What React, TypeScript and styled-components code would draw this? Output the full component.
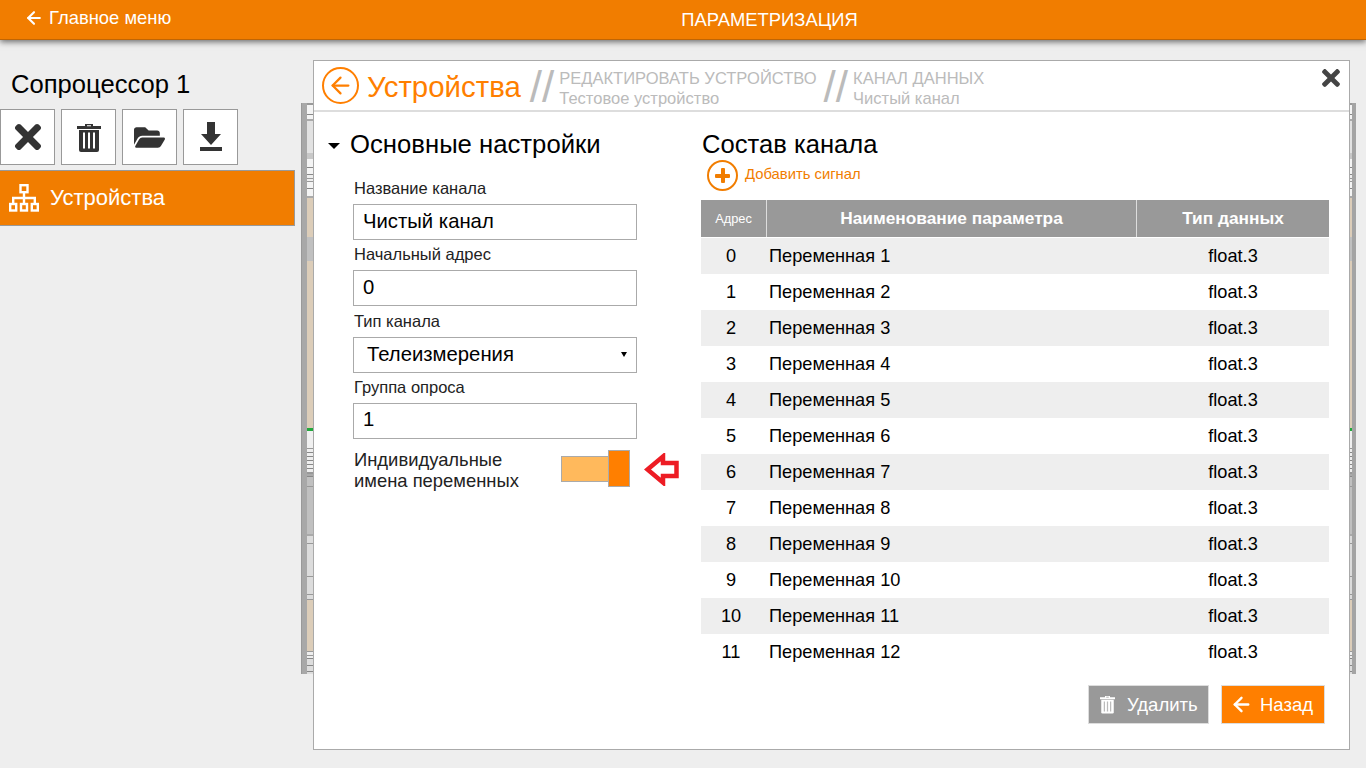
import * as React from "react";
import styled, { createGlobalStyle } from "styled-components";
import { ArrowLeft } from "lucide-react";
import { FaTimes, FaFolderOpen } from "react-icons/fa";

const orange = "#f17d00";
const bright = "#ff7f00";

const GlobalStyle = createGlobalStyle`
  html, body { margin: 0; height: 100%; background: #eeeeee; overflow: hidden; }
  body { font-family: "Liberation Sans", Arial, sans-serif; color: #000; }
`;

const Page = styled.div`
  position: relative;
  width: 1366px;
  height: 768px;
  overflow: hidden;
`;

const TopBar = styled.header`
  height: 40px;
  background: ${orange};
  border-bottom: 1px solid #c06504;
  box-shadow: 0 2px 6px rgba(0, 0, 0, 0.55);
  display: grid;
  grid-template-columns: 1fr auto 1fr;
  align-items: center;
  color: #fff;
  box-sizing: border-box;
  padding-left: 173px;
  position: relative;
`;

const MenuLink = styled.div`
  position: absolute;
  left: 24px;
  top: 7px;
  display: flex;
  align-items: center;
  gap: 5px;
  font-size: 18.4px;
  line-height: 21px;
`;

const BarTitle = styled.div`
  grid-column: 2;
  font-size: 18.4px;
`;

const Body = styled.div`
  display: flex;
  align-items: flex-start;
`;

const Sidebar = styled.aside`
  width: 295px;
  flex: none;
`;

const SideTitle = styled.div`
  font-size: 25.6px;
  line-height: 28px;
  padding: 30px 0 11px 11px;
`;

const ToolRow = styled.div`
  display: flex;
  gap: 6px;
`;

const ToolButton = styled.div`
  width: 55px;
  height: 56px;
  box-sizing: border-box;
  background: #fff;
  border: 1px solid #999;
  display: flex;
  align-items: center;
  justify-content: center;
  color: #333;
`;

const NavItem = styled.div`
  height: 56px;
  margin-top: 5px;
  box-sizing: border-box;
  background: ${orange};
  border: 1px solid #999;
  border-left: none;
  color: #fff;
  display: flex;
  align-items: center;
  gap: 11px;
  padding-left: 9px;
  font-size: 22px;
`;

const Backdrop = styled.div`
  margin: 63px 0 0 6px;
  width: 1055px;
  height: 571px;
  box-sizing: border-box;
  display: flex;
  background: #a8a8a8;
  padding-left: 5px;
  border-left: 1px solid #999;
  border-right: 4px solid #a4a4a4;
`;

const StripeColumn = styled.div`
  flex: 1;
  display: flex;
  flex-direction: column;
  background: #ddd;
  overflow: hidden;
`;

const Stripe = styled.div<{ $h: number; $c: string }>`
  height: ${(p) => p.$h}px;
  background: ${(p) => p.$c};
  flex: none;
`;

const Modal = styled.section`
  position: absolute;
  left: 313px;
  top: 60px;
  width: 1037px;
  height: 690px;
  box-sizing: border-box;
  background: #fff;
  border: 1px solid #aaa;
  display: flex;
  flex-direction: column;
`;

const ModalHead = styled.div`
  height: 51px;
  flex: none;
  box-sizing: border-box;
  border-bottom: 2px solid #ddd;
  display: flex;
  align-items: center;
  padding-left: 8px;
  position: relative;
`;

const BackCircle = styled.div`
  width: 37px;
  height: 37px;
  box-sizing: border-box;
  border: 2px solid ${bright};
  border-radius: 50%;
  display: flex;
  align-items: center;
  justify-content: center;
  color: ${bright};
`;

const CrumbMain = styled.div`
  font-size: 29.4px;
  color: ${bright};
  margin: 3px 0 0 8px;
`;

const Slashes = styled.div<{ $left: number }>`
  font-size: 44px;
  color: #bbb;
  margin: 2px 5px 0 ${(p) => p.$left}px;
  line-height: 40px;
`;

const Crumb = styled.div`
  color: #bbb;
  font-size: 16.55px;
  line-height: 20px;
  margin-top: 7px;
`;

const CloseIcon = styled.div`
  position: absolute;
  right: 5px;
  top: 4px;
  color: #444;
  display: flex;
`;

const ModalBody = styled.div`
  flex: 1;
  display: flex;
`;

const LeftCol = styled.div`
  width: 388px;
  flex: none;
  box-sizing: border-box;
  padding: 17px 0 0 14px;
`;

const SectionTitle = styled.div`
  font-size: 25.7px;
  line-height: 30px;
  display: flex;
  align-items: center;
`;

const Caret = styled.span`
  width: 0;
  height: 0;
  border-left: 6px solid transparent;
  border-right: 6px solid transparent;
  border-top: 6px solid #000;
  margin-right: 10px;
  margin-top: 3px;
`;

const Form = styled.div`
  padding: 20px 0 0 25px;
  width: 284px;
`;

const FieldLabel = styled.div`
  font-size: 16.5px;
  line-height: 18px;
  color: #222;
  padding: 0 0 2px 1px;
`;

const FieldValue = styled.div`
  height: 36px;
  box-sizing: border-box;
  border: 1px solid #aaa;
  margin: 5px 0 5.33px;
  padding: 0 9px 2px;
  display: flex;
  align-items: center;
  justify-content: space-between;
  font-size: 20.3px;
`;

const SelectValue = styled(FieldValue)`
  padding: 0 9px 0 13px;
`;

const SelectCaret = styled.span`
  width: 0;
  height: 0;
  border-left: 3px solid transparent;
  border-right: 3px solid transparent;
  border-top: 5px solid #000;
`;

const ToggleRow = styled.div`
  display: flex;
  align-items: center;
  margin-top: 10px;
  padding-left: 1px;
  width: 360px;
`;

const ToggleLabel = styled.div`
  width: 207px;
  font-size: 18.4px;
  line-height: 21px;
  color: #222;
  white-space: nowrap;
`;

const ToggleTrack = styled.div`
  position: relative;
  width: 69px;
  height: 26px;
  box-sizing: border-box;
  background: #ffb95c;
  border: 1px solid #aaa;
  margin-top: -2px;
`;

const ToggleKnob = styled.div`
  position: absolute;
  right: -1px;
  top: -7px;
  width: 22px;
  height: 37px;
  box-sizing: border-box;
  background: ${bright};
  border: 1px solid #aaa;
`;

const Hint = styled.svg`
  margin: -1px 0 0 14px;
`;

const RightCol = styled.div`
  flex: 1;
  min-width: 0;
  padding: 17px 20px 0 0;
  display: flex;
  flex-direction: column;
`;

const TableTitle = styled.div`
  font-size: 25.6px;
  line-height: 30px;
`;

const AddRow = styled.div`
  display: flex;
  align-items: center;
  gap: 7px;
  color: ${orange};
  font-size: 14.8px;
  padding-left: 5px;
  height: 33px;
  margin: 0 0 8px;
`;

const AddLabel = styled.span`
  margin-top: -4px;
`;

const AddCircle = styled.div`
  width: 31px;
  height: 31px;
  box-sizing: border-box;
  border: 2px solid ${orange};
  border-radius: 50%;
  position: relative;
  flex: none;
  &::before,
  &::after {
    content: "";
    position: absolute;
    background: ${orange};
    border-radius: 1px;
  }
  &::before { left: 6px; right: 6px; top: 11.5px; height: 4px; }
  &::after { top: 6px; bottom: 6px; left: 11.5px; width: 4px; }
`;

const Table = styled.div`
  font-size: 18.2px;
  width: 628px;
  margin-left: -1px;
`;

const HeadRow = styled.div`
  display: grid;
  grid-template-columns: 65px 369px 192px;
  gap: 0 1px;
  height: 37px;
  background: #ddd;
  margin-bottom: 1px;
  color: #fff;
`;

const HeadCell = styled.div<{ $small?: boolean }>`
  display: flex;
  align-items: center;
  justify-content: center;
  background: #999;
  font-size: ${(p) => (p.$small ? "12.8px" : "17.3px")};
  font-weight: ${(p) => (p.$small ? 400 : 700)};
`;

const DataRow = styled.div<{ $alt: boolean }>`
  display: grid;
  grid-template-columns: 68px 368px 192px;
  height: 36px;
  align-items: center;
  background: ${(p) => (p.$alt ? "#eeeeee" : "#fff")};
`;

const AddrCell = styled.div`
  text-align: center;
  padding-right: 8px;
`;

const NameCell = styled.div`
  white-space: nowrap;
`;

const TypeCell = styled.div`
  text-align: center;
`;

const Footer = styled.div`
  display: flex;
  justify-content: flex-end;
  gap: 12px;
  margin-top: 15px;
  padding-right: 4px;
`;

const ActionButton = styled.div<{ $bg: string }>`
  height: 39px;
  box-sizing: border-box;
  border: 1px solid #ddd;
  background: ${(p) => p.$bg};
  color: #fff;
  display: flex;
  align-items: center;
  font-size: 18.5px;
`;

const DeleteButton = styled(ActionButton)`
  width: 121px;
  padding-left: 11px;
  gap: 12px;
`;

const BackButton = styled(ActionButton)`
  width: 104px;
  padding-left: 8px;
  gap: 7px;
`;

const TrashIcon = ({ w, h, color, gap }: { w: number; h: number; color: string; gap: string }) => (
  <svg width={w} height={h} viewBox="0 0 24 29">
    <path d="M8 3V1h8v2h8v3H0V3zM10 2.2v1h4v-1z" fill={color} fillRule="evenodd" />
    <path d="M2 7h20v20a2 2 0 0 1-2 2H4a2 2 0 0 1-2-2z" fill={color} />
    <path d="M6 9.5h2v16H6zM11 9.5h2v16h-2zM16 9.5h2v16h-2z" fill={gap} />
  </svg>
);

const DownloadIcon = () => (
  <svg width="22" height="30" viewBox="0 0 22 30">
    <path d="M7 0h8v12h6L11 23 1 12h6z" fill="#333" />
    <rect y="25" width="22" height="4" fill="#333" />
  </svg>
);

const TreeIcon = () => (
  <svg width="30" height="28" viewBox="0 0 30 28" fill="none" stroke="#fff" strokeWidth="2.4">
    <rect x="11.5" y="1.2" width="7" height="7" />
    <rect x="1.2" y="20" width="6" height="6.5" />
    <rect x="12" y="20" width="6" height="6.5" />
    <rect x="22.8" y="20" width="6" height="6.5" />
    <path d="M15 8v12M4.2 20v-6h21.6v6" />
  </svg>
);

const rows = Array.from({ length: 12 }, (_, i) => i);

const stripes: [number, string][] = [
  [2, "#999"], [9, "#f4f4f4"], [1, "#888"], [4, "#f4f4f4"], [2, "#aaa"],
  [32, "#e2e2e2"], [6, "#c8c8c8"], [8, "#f4f4f4"], [1, "#888"], [6, "#f4f4f4"],
  [1, "#888"], [3, "#eee"], [1, "#999"], [2, "#eee"], [1, "#999"], [6, "#f4f4f4"],
  [1, "#888"], [7, "#f4f4f4"], [2, "#aaa"], [39, "#dccdb9"], [24, "#c0c0c0"],
  [167, "#dccdb9"], [3, "#22a83c"], [17, "#f0f0f0"], [1, "#999"], [3, "#eee"],
  [1, "#888"], [3, "#eee"], [1, "#888"], [3, "#eee"], [1, "#888"], [3, "#eee"],
  [1, "#888"], [3, "#eee"], [1, "#888"], [3, "#eee"], [2, "#999"], [2, "#aaa"],
  [1, "#888"], [9, "#c0c0c0"], [1, "#999"], [47, "#c0c0c0"], [2, "#aaa"],
  [7, "#dcdcdc"], [1, "#999"], [32, "#dcdcdc"], [1, "#999"], [17, "#dcdcdc"],
  [1, "#999"], [4, "#dcdcdc"], [1, "#999"], [51, "#dccdb9"], [1, "#999"],
  [3, "#eee"], [1, "#999"], [2, "#eee"], [1, "#888"], [6, "#ddd"], [1, "#888"],
  [5, "#ddd"], [1, "#888"], [4, "#ddd"],
];

export default function App() {
  return (
    <Page>
      <GlobalStyle />
      <TopBar>
        <MenuLink>
          <ArrowLeft size={20} strokeWidth={2.5} />
          Главное меню
        </MenuLink>
        <BarTitle>ПАРАМЕТРИЗАЦИЯ</BarTitle>
      </TopBar>
      <Body>
        <Sidebar>
          <SideTitle>Сопроцессор 1</SideTitle>
          <ToolRow>
            <ToolButton><FaTimes size={38} /></ToolButton>
            <ToolButton><TrashIcon w={24} h={29} color="#333" gap="#fff" /></ToolButton>
            <ToolButton><FaFolderOpen size={31} /></ToolButton>
            <ToolButton><DownloadIcon /></ToolButton>
          </ToolRow>
          <NavItem><TreeIcon />Устройства</NavItem>
        </Sidebar>
        <Backdrop>
          <StripeColumn>
            {stripes.map(([h, c], i) => (
              <Stripe key={i} $h={h} $c={c} />
            ))}
          </StripeColumn>
        </Backdrop>
      </Body>
      <Modal>
        <ModalHead>
          <BackCircle><ArrowLeft size={27} strokeWidth={2} /></BackCircle>
          <CrumbMain>Устройства</CrumbMain>
          <Slashes $left={9}>//</Slashes>
          <Crumb>РЕДАКТИРОВАТЬ УСТРОЙСТВО<br />Тестовое устройство</Crumb>
          <Slashes $left={7}>//</Slashes>
          <Crumb>КАНАЛ ДАННЫХ<br />Чистый канал</Crumb>
          <CloseIcon><FaTimes size={26} /></CloseIcon>
        </ModalHead>
        <ModalBody>
          <LeftCol>
            <SectionTitle><Caret />Основные настройки</SectionTitle>
            <Form>
              <FieldLabel>Название канала</FieldLabel>
              <FieldValue>Чистый канал</FieldValue>
              <FieldLabel>Начальный адрес</FieldLabel>
              <FieldValue>0</FieldValue>
              <FieldLabel>Тип канала</FieldLabel>
              <SelectValue>Телеизмерения<SelectCaret /></SelectValue>
              <FieldLabel>Группа опроса</FieldLabel>
              <FieldValue>1</FieldValue>
              <ToggleRow>
                <ToggleLabel>Индивидуальные<br />имена переменных</ToggleLabel>
                <ToggleTrack><ToggleKnob /></ToggleTrack>
                <Hint width="36" height="33" viewBox="0 0 36 33">
                  <path d="M3.5 16.5 19 3.5v6.5h13.5v13H19v6.5z" fill="#fff" stroke="#ed1c24" strokeWidth="4.5" />
                </Hint>
              </ToggleRow>
            </Form>
          </LeftCol>
          <RightCol>
            <TableTitle>Состав канала</TableTitle>
            <AddRow><AddCircle /><AddLabel>Добавить сигнал</AddLabel></AddRow>
            <Table>
              <HeadRow>
                <HeadCell $small>Адрес</HeadCell>
                <HeadCell>Наименование параметра</HeadCell>
                <HeadCell>Тип данных</HeadCell>
              </HeadRow>
              {rows.map((i) => (
                <DataRow key={i} $alt={i % 2 === 0}>
                  <AddrCell>{i}</AddrCell>
                  <NameCell>Переменная {i + 1}</NameCell>
                  <TypeCell>float.3</TypeCell>
                </DataRow>
              ))}
            </Table>
            <Footer>
              <DeleteButton $bg="#999"><TrashIcon w={15} h={19} color="#fff" gap="#bbb" />Удалить</DeleteButton>
              <BackButton $bg={bright}><ArrowLeft size={23} strokeWidth={2.5} />Назад</BackButton>
            </Footer>
          </RightCol>
        </ModalBody>
      </Modal>
    </Page>
  );
}
